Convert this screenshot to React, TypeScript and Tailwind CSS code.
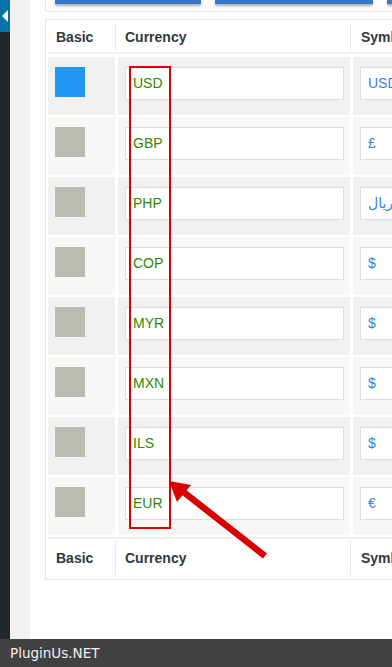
import React from "react"

type Currency = {
  code: string
  symbol: string
  basic?: boolean
}

const currencies: Currency[] = [
  { code: "USD", symbol: "USD", basic: true },
  { code: "GBP", symbol: "£" },
  { code: "PHP", symbol: "ريال" },
  { code: "COP", symbol: "$" },
  { code: "MYR", symbol: "$" },
  { code: "MXN", symbol: "$" },
  { code: "ILS", symbol: "$" },
  { code: "EUR", symbol: "€" },
]

function HeadRow({ top }: { top?: boolean }) {
  return (
    <div
      className={`flex bg-white text-[14px] font-bold text-[#32373c] ${
        top ? "h-[34px] pt-[2px] border-b-2 border-[#f0f0f0]" : "mt-[2px] h-[40px] border-t-2 border-[#f0f0f0]"
      }`}
    >
      <div className="w-[68px] shrink-0 border-r border-[#e8e8e8] pl-[8px] flex items-center my-[2px]">Basic</div>
      <div className="w-[235px] shrink-0 border-r border-[#e8e8e8] pl-[9px] flex items-center my-[2px]">Currency</div>
      <div className="flex-1 pl-[10px] flex items-center">Symbol</div>
    </div>
  )
}

export default function App() {
  return (
    <div className="relative h-[667px] w-[392px] overflow-hidden flex flex-col font-['Liberation_Sans',Arial,sans-serif]">
      <div className="flex flex-1 min-h-0">
        {/* admin sidebar */}
        <div className="w-[10px] shrink-0 bg-[#23282d]">
          <div className="h-[32px] bg-[#0073aa] flex items-center justify-end pr-[1px]">
            <svg width="8" height="12" viewBox="0 0 8 12">
              <path d="M7 0 L1 6 L7 12 Z" fill="#ffffff" />
            </svg>
          </div>
        </div>
        <div className="w-[20px] shrink-0 bg-[#f1f1f1]" />

        <main className="flex-1 bg-white pl-[15px] min-w-0">
          {/* top options box */}
          <div className="w-[420px] h-[12px] border-x border-b border-[#e5e5e5] rounded-b-[3px] flex gap-[14px] pl-[9px]">
            <div className="w-[146px] h-[4px] bg-[#3578cb] shadow-[0_2px_3px_rgba(0,0,0,0.35)]" />
            <div className="w-[158px] h-[4px] bg-[#3578cb] shadow-[0_2px_3px_rgba(0,0,0,0.35)]" />
            <div className="w-[60px] h-[4px] bg-[#3578cb] shadow-[0_2px_3px_rgba(0,0,0,0.35)]" />
          </div>

          {/* currencies table */}
          <div className="mt-[7px] w-[420px] border border-[#e5e5e5] px-[2px] pb-[2px]">
            <HeadRow top />
            <div className="flex flex-col gap-[2px] pt-[3px]">
              {currencies.map((c, i) => (
                <div key={c.code} className="flex gap-[3px] h-[58px]">
                  <div className={`w-[67px] shrink-0 pl-[7px] pt-[10px] ${i % 2 === 0 ? "bg-[#f0f0f0]" : "bg-[#f7f7f6]"}`}>
                    <div className={`w-[30px] h-[30px] ${c.basic ? "bg-[#2196f3]" : "bg-[#bbbab3]"}`} />
                  </div>
                  <div className={`w-[232px] shrink-0 pl-[7px] pt-[10px] ${i % 2 === 0 ? "bg-[#f0f0f0]" : "bg-[#f7f7f6]"}`}>
                    <div className="w-[219px] h-[33px] border border-[#dddddd] bg-white pl-[7px] flex items-center text-[14px] text-[#2f8800]">
                      {c.code}
                    </div>
                  </div>
                  <div className={`flex-1 pl-[7px] pt-[10px] ${i % 2 === 0 ? "bg-[#f0f0f0]" : "bg-[#f7f7f6]"}`}>
                    <div className="w-[120px] h-[33px] border border-[#dddddd] bg-white pl-[7px] flex items-center text-[14px] text-[#3b7ddd] font-['Liberation_Sans','DejaVu_Sans',sans-serif]">
                      {c.symbol}
                    </div>
                  </div>
                </div>
              ))}
            </div>
            <HeadRow />
          </div>
        </main>
      </div>

      <footer className="h-[28px] shrink-0 bg-[#414141] pl-[10px] flex items-center text-[13.5px] text-[#f0f0f0] font-['DejaVu_Sans',sans-serif]">
        PluginUs.NET
      </footer>

      {/* annotation: highlight box + arrow */}
      <div className="absolute left-[129px] top-[66px] w-[42px] h-[463px] border-2 border-[#dd0000]" />
      <svg className="absolute left-0 top-0" width="392" height="667" viewBox="0 0 392 667">
        <line x1="265" y1="556" x2="181" y2="490" stroke="#d80000" strokeWidth="6.5" />
        <polygon points="169,481 191,485 177,502" fill="#d80000" />
      </svg>
    </div>
  )
}
